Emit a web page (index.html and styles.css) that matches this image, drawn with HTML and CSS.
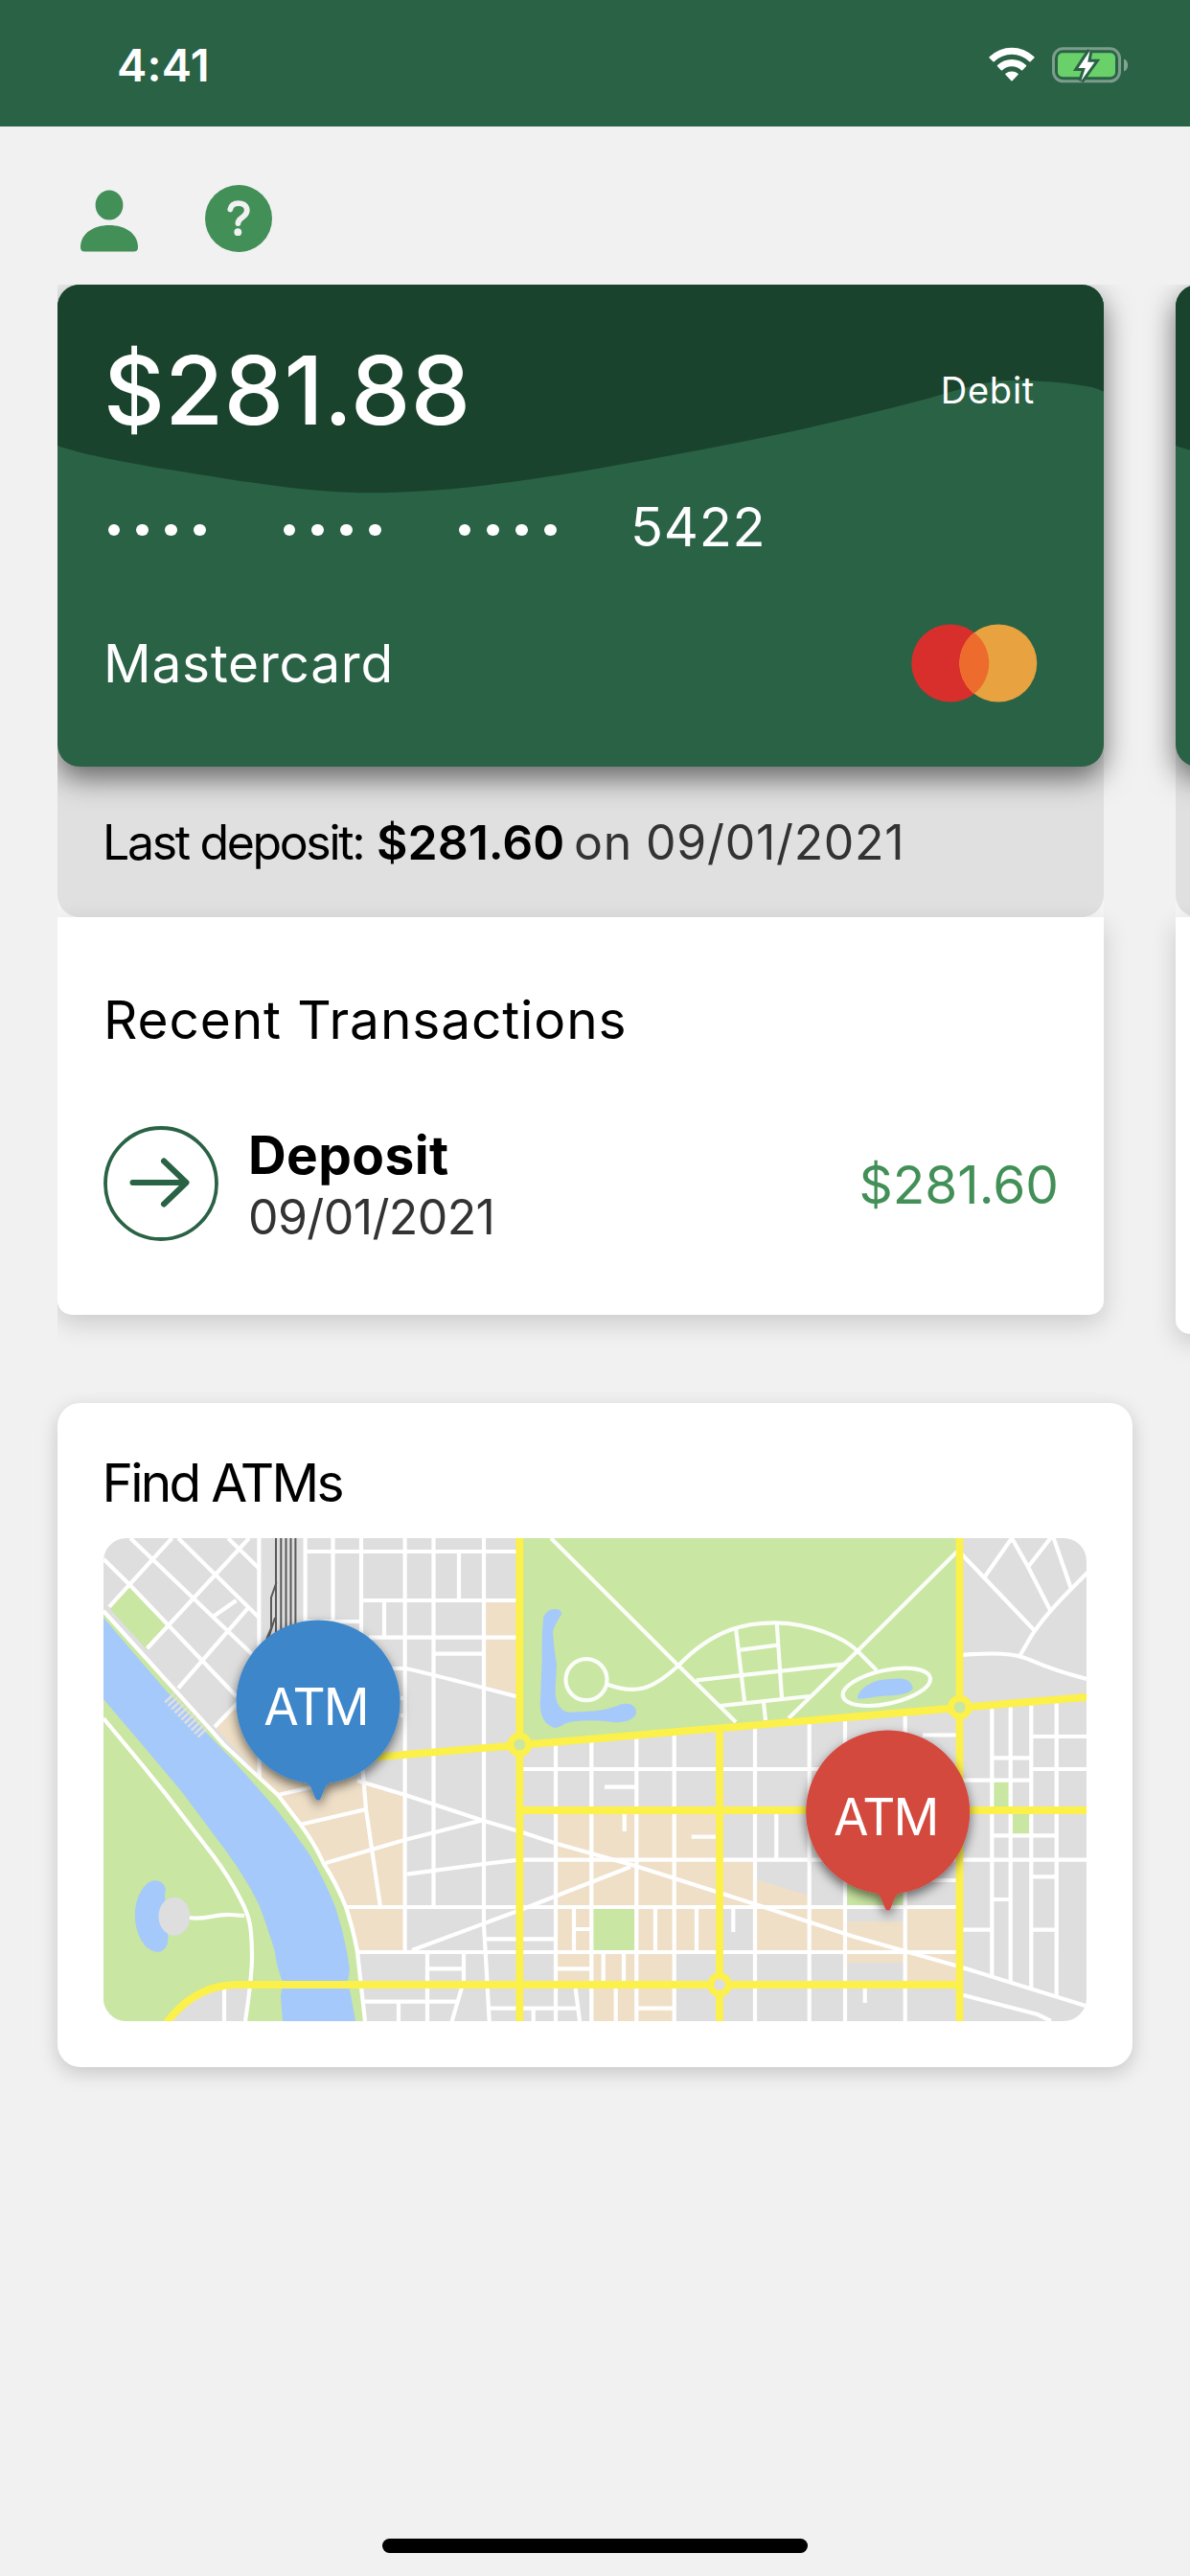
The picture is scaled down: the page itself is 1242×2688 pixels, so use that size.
FILE: index.html
```html
<!DOCTYPE html>
<html lang="en">
<head>
<meta charset="utf-8">
<title>Accounts</title>
<link rel="stylesheet" href="styles.css">
</head>
<body>
<header class="status">
  <span class="status-time">4:41</span>
  <div class="status-icons">
    <svg class="wifi" viewBox="0 0 48 36" fill="#fff">
      <path d="M.6 10.2A33.5 33.5 0 0 1 47.4 10.2a1 1 0 0 1 0 1.3L43.6 15.200a1 1 0 0 1-1.300 0 26.500 26.500 0 0 0-36.600 0 1 1 0 0 1-1.300 0L.6 11.500a1 1 0 0 1 0-1.300z"/>
      <path d="M9 19a21.500 21.500 0 0 1 30 0 1 1 0 0 1 0 1.300l-3.800 3.900a1 1 0 0 1-1.300 0 14.500 14.500 0 0 0-19.800 0 1 1 0 0 1-1.300 0L9 20.300A1 1 0 0 1 9 19z"/>
      <path d="M17.500 27.800a10 10 0 0 1 13 0 .9.9 0 0 1 0 1.300L24.600 35.200a.9.9 0 0 1-1.200 0L17.500 29.100a.9.9 0 0 1 0-1.300z"/>
    </svg>
    <svg class="battery" viewBox="0 0 80 38">
      <rect x="1.500" y="1.800" width="69" height="34" rx="10" fill="none" stroke="#fff" stroke-opacity=".38" stroke-width="3"/>
      <path d="M75 12.500c5.500 2 5.500 11 0 13z" fill="#fff" fill-opacity=".42"/>
      <rect x="6" y="6.300" width="60" height="25" rx="5" fill="#69d06a"/>
      <path d="M39.500 4L27.500 22h7.300l-4.500 13.500L44.500 15.800h-7.300z" fill="#fff" stroke="#2a6246" stroke-width="6" paint-order="stroke"/>
    </svg>
  </div>
</header>

<nav class="toolbar">
  <svg class="icon-person" viewBox="0 0 60 66" fill="#428f57">
    <ellipse cx="30" cy="16" rx="14.400" ry="15.500"/>
    <path d="M0 60C0 46 13 37 30 37s30 9 30 23c0 3-1.500 4.500-4.500 4.500h-51C1.500 64.500 0 63 0 60z"/>
  </svg>
  <svg class="icon-help" viewBox="0 0 70 70">
    <circle cx="35" cy="35" r="35" fill="#428f57"/>
    <path d="M26.300 25.500c.8-4 4-6.400 8.600-6.400 5.300 0 8.900 3 8.900 7.500 0 7.500-9.400 6.900-9.400 13.500" fill="none" stroke="#f1f1f1" stroke-width="5.800" stroke-linecap="round"/>
    <circle cx="34.300" cy="49.200" r="3.900" fill="#f1f1f1"/>
  </svg>
</nav>

<section class="carousel">
  <article class="account">
    <div class="card">
      <svg class="wave" viewBox="0 0 1092 218" preserveAspectRatio="none">
        <path d="M0 0H1092V111.600C1085 108 1077 106 1067 105 1050 102 1020 99.500 995 100 960 101 935 112 900 121 795 149 690 170 580 189 480 207 400 217 328 217.300 250 217.500 165 200 103 191 65 184 25 177 0 168z"/>
      </svg>
      <div class="card-top">
        <span class="balance">$281.88</span>
        <span class="kind">Debit</span>
      </div>
      <div class="number">
        <span class="dots"><i></i><i></i><i></i><i></i></span>
        <span class="dots"><i></i><i></i><i></i><i></i></span>
        <span class="dots"><i></i><i></i><i></i><i></i></span>
        <span class="last4">5422</span>
      </div>
      <div class="card-bottom">
        <span class="brand">Mastercard</span>
        <svg class="logo" viewBox="0 0 132 82">
          <circle cx="40.800" cy="41" r="40.500" fill="#d92f2c"/>
          <circle cx="90.800" cy="41" r="40.500" fill="#e8a23f"/>
          <path d="M65.800 9.200a40.500 40.500 0 0 1 0 63.600 40.500 40.500 0 0 1 0-63.600z" fill="#ed6b2c"/>
        </svg>
      </div>
    </div>
    <div class="strip-wrap">
      <div class="strip">
        <span class="strip-label">Last deposit:</span>
        <strong>$281.60</strong>
        <span class="strip-date">on</span>
        <span class="strip-date">09/01/2021</span>
      </div>
    </div>
    <div class="panel">
      <h2>Recent Transactions</h2>
      <div class="tx">
        <svg class="tx-icon" viewBox="0 0 120 120" fill="none" stroke="#2a6246">
          <circle cx="60" cy="60" r="58" stroke-width="3.800"/>
          <path d="M30.500 59H86M63 36.500L86.500 59 63 81.500" stroke-width="6" stroke-linecap="round" stroke-linejoin="round"/>
        </svg>
        <div class="tx-info">
          <span class="tx-name">Deposit</span>
          <span class="tx-date">09/01/2021</span>
        </div>
        <span class="tx-amount">$281.60</span>
      </div>
    </div>
  </article>
  <article class="account">
    <div class="card">
      <svg class="wave" viewBox="0 0 1092 218" preserveAspectRatio="none">
        <path d="M0 0H1092V111.600C1085 108 1077 106 1067 105 1050 102 1020 99.500 995 100 960 101 935 112 900 121 795 149 690 170 580 189 480 207 400 217 328 217.300 250 217.500 165 200 103 191 65 184 25 177 0 168z"/>
      </svg>
    </div>
    <div class="strip-wrap"><div class="strip"></div></div>
    <div class="panel panel-tall"></div>
  </article>
</section>

<section class="atms">
  <h2>Find ATMs</h2>
  <svg class="map" viewBox="108 1605 1026 504">
    <defs>
      <filter id="pin-shadow" x="-30%" y="-30%" width="160%" height="160%">
        <feDropShadow dx="0" dy="5" stdDeviation="6" flood-color="#000" flood-opacity=".55"/>
      </filter>
      <path id="pin" d="M-11.500 84.700A85.500 85.500 0 1 1 11.500 84.700C7 87 5 96 2.500 101 1 103-1 103-2.500 101-5 96-7 87-11.500 84.700z"/>
    </defs>
    <rect x="108" y="1605" width="1026" height="504" fill="#dedede"/>

    <!-- commercial blocks -->
    <g fill="#efdfc7">
      <path d="M507 1672h34v97l-34-10zM224 1802l24-26 62 60 64 22 48 15v162h-50L361 1990 338 1945 290 1873z"/>
      <path d="M582 1891h169v99H582zM751 1943h37v47h-37zM788 1961l56 17v12h-56zM582 1990h37v47h-37zM662 1990h89v47h-89zM788 1990h95v47h-95z"/>
      <path d="M883 2005h62v43h-62zM946 1991h53v77h-53zM582 2037h122v34H582zM619 2071h85v38h-85z"/>
    </g>
    <path d="M751 1990h37v47h-37z" fill="#dedede"/>

    <!-- parks -->
    <g fill="#c9e6a2">
      <path d="M542 1605h459v177l-459 39z"/>
      <path d="M134.700 1655L175 1695 153 1721 115 1679zM619 1992h43v44h-43zM883 1962h61v27h-61zM1037 1859h16v27h-16zM1057 1893h17v21h-17z"/>
      <path d="M108 1681L233 1820 290 1873 313 1903 338 1945 361 1990 373 2037 381 2109H256L261 2071H240Q200 2074 175 2109H108z"/>
    </g>

    <!-- water -->
    <g fill="#a5c9fb">
      <path d="M108 1688L174 1765 227 1820C250 1843 270 1867 290 1890Q310 1916 323 1935 339 1962 350 1990 360 2020 364.700 2053 365 2063 361.700 2068 366 2078 367 2087L371 2109H295L293 2083 295 2068 Q288 2050 287 2037 279 2010 270 1987 258 1962 237 1933L190 1870 148 1820 108 1773z"/>
      <path d="M172 1977C176 1965 163 1957 153 1966 137 1981 137 2014 152 2031 165 2043 178 2035 175 2018z"/>
      <path d="M585.700 1685C588 1677 570 1676 567 1689Q565 1710 565.700 1730L564 1773C563 1790 567 1799 579 1803 587 1802 587 1798 597 1796.500Q620 1794 640 1797C650 1798 663 1795 664 1787 664 1777 652 1776 644 1780 625 1787 615 1785 593 1787 583 1784 580 1775 579.500 1765L581 1737Q578 1720 577 1703 578 1697 585.700 1685z"/>
      <path d="M895 1772.700C895 1763 910 1752 930 1752 946 1750 951 1754 953 1762 948 1768 938 1769 925 1769.500 912 1770 905 1773 895 1772.700z"/>
    </g>
    <ellipse cx="182" cy="1999.700" rx="16.500" ry="20" fill="#dedede"/>
    <path d="M176 1771L212 1809" stroke="#dedede" stroke-width="13" stroke-dasharray="2.600 2.400"/>

    <!-- railway -->
    <g fill="none" stroke="#5a5a5a" stroke-width="2">
      <path d="M288 1605v110M293.300 1605v110M298.500 1605v110M303.500 1605v110M308.400 1605v110M288.600 1651l-5.600 16v32l-5 12M287 1688l-7 22"/>
    </g>

    <!-- streets -->
    <g fill="none" stroke="#fff" stroke-width="4.200">
      <path d="M108 1681L217 1801.700 233 1820 290 1873 313 1903 Q328 1923 338 1945 351 1965 361 1990 369 2014 373 2037L381 2109"/>
      <path d="M108 1793L147 1840 173 1872 223 1937Q240 1960 250 1980C261 2000 263 2010 263 2045Q262 2070 256 2109M198 2001C215 2004 225 1997 240 1998L255 1999M234 2074v35"/>
      <path d="M108 1626.700L134.700 1653 246.600 1770M136 1605L264 1727M186 1605L270.400 1688M238 1605L270.400 1636.700M179.500 1605L114 1676.700M260 1605L153.600 1720M260 1676.700L186 1761.700M246.600 1670L220.800 1688M250 1775L224 1802"/>
      <path d="M270.400 1605v120M318.600 1605v90M347.500 1605v87M377 1605v100M422.600 1605v432M452.500 1605v385M505 1605v405L506.700 2037 510.700 2109M479 1619v51M401 1670v39"/>
      <path d="M318.600 1619H542M377 1670H542M385 1708.700H542M318.600 1692H377M452 1725.700H505M405 1741H422Q428 1741 542 1771M424 1772h-6M424 1790h-6"/>
      <path d="M373 1858L423 1873 505 1900 542 1911 580 1923.500 663 1947 786.700 1986.500 890 2020.500 1000 2051.700 1133 2093"/>
      <path d="M340 1944L422 1920 505 1899M313 1904L382 1888M290 1873L325 1865M378 1840L382 1888 397 1990M270.700 1832v23"/>
      <path d="M425 1955.700L505 1945 542 1940.700H1134M360 1990H1001M373 2037H1001M430 2035L538 1995 658 1948M508 2023.300H578M446 2037v72M484 2037v30L471.700 2109M446 2054.300H484M378 2088.700H477M416 2089v20M510 2095.700H603"/>
      <path d="M580 1819v290M617.300 1816v293M664.300 1812v297M703.700 1809v300M788 1802v307M844.700 1797v312M882 1794v315M944.700 1788v321M542 1846H1001M631 1864.700H664M651.700 1892v19M721.700 1916.700H747M810.300 1892v49"/>
      <path d="M599 1990v47M599 2013H617M684 1990v47M727 1990v47M765.300 1990v26M629.700 2037v30M651 2037v30M581 2054.300H617M642.700 2075v34M600.700 2075L605 2109M556.700 2096v13M664 2095.700H704M902.700 2075v15"/>
      <path d="M963 1810.500H998M944 1962H1000M1035.300 1780v283M1054.700 1778v290M1076.300 1776v299M1102.700 1774v309M1035 1834.300H1076M1076 1812H1134M1076 1846H1134M1005 1857.700H1076M1035 1915.300H1102M1076 1958.300H1102M1035 1982H1055M1004 2013.700H1035M1076 2013.700H1102M1005 2081.700L1083 2102 1097 2109"/>
      <path d="M1003 1621L1080 1701.700M1028 1645L1056 1605 1073 1635 1096 1680M1073 1635L1098 1603M1099 1603L1118 1658M1136 1640L1118 1658Q1090 1686 1076.700 1706.700L1065 1726.700M1003 1727Q1050 1723 1068 1729.500C1080 1733 1085 1739 1134 1752"/>
    </g>

    <!-- park paths -->
    <g fill="none" stroke="#fff" stroke-opacity=".93" stroke-width="4.200">
      <path d="M575 1605L708 1738 768 1797M634 1757.700C663 1768 680 1764 708 1738 745 1699 780 1693 810 1693.300 845 1694 880 1708 895 1722.700L915 1743"/>
      <circle cx="612" cy="1752.700" r="21.500"/>
      <path d="M1000 1618L895 1722.700 823 1793M726.700 1753.300L880 1736.700M751.700 1780L845 1770M768 1699L777 1775M810.700 1693L816 1771.700M773 1721.700L811.700 1716.700M797 1776.700L799 1795"/>
      <ellipse cx="925.300" cy="1760.300" rx="46.500" ry="17.500" transform="rotate(-12 925.300 1760.300)"/>
    </g>

    <!-- main roads -->
    <g fill="none" stroke="#fcf04a" stroke-width="7.800">
      <path d="M542.300 1605v504M751 1803v306M1001.500 1605v504M380 1834.500L542 1821 1001 1782 1134 1771M542 1889H1134M172 2113Q202 2072 245 2071H1001"/>
    </g>
    <g stroke="#fcf04a" stroke-width="6.800">
      <circle cx="542.300" cy="1820.500" r="9.400" fill="#c9e6a2"/>
      <circle cx="1001.700" cy="1781.500" r="9.400" fill="#c9e6a2"/>
      <circle cx="751" cy="2071" r="9.400" fill="#dedede"/>
    </g>

    <!-- ATM pins -->
    <g class="pin" transform="translate(332 1776)">
      <use href="#pin" fill="#3c86ca" filter="url(#pin-shadow)"/>
      <text x="-2.500" y="24">ATM</text>
    </g>
    <g class="pin" transform="translate(926.700 1891)">
      <use href="#pin" fill="#d3483e" filter="url(#pin-shadow)"/>
      <text x="-2.500" y="23.500">ATM</text>
    </g>
  </svg>
</section>

<div class="home-bar"></div>
</body>
</html>
```

FILE: styles.css
```css
* { box-sizing: border-box; }

body {
  margin: 0;
  width: 1242px;
  height: 2688px;
  display: flex;
  flex-direction: column;
  overflow: hidden;
  background: #f1f1f1;
  color: #000;
  font-family: Inter, "Liberation Sans", sans-serif;
  white-space: nowrap;
}

svg { display: block; flex: none; }
h2 { margin: 0; font-size: 55px; font-weight: 400; line-height: 68px; }

/* status bar */
.status {
  flex: none;
  height: 132px;
  padding: 38px 64px 0 122px;
  display: flex;
  justify-content: space-between;
  align-items: flex-start;
  background: #2a6246;
  color: #fff;
}
.status-time { font-size: 47px; font-weight: 600; line-height: 60px; letter-spacing: .2px; }
.status-icons { display: flex; gap: 18.500px; padding-top: 11px; }
.wifi { width: 48px; height: 36px; }
.battery { width: 80px; height: 38px; }

/* toolbar */
.toolbar {
  flex: none;
  height: 165px;
  padding: 61px 0 0 84px;
  display: flex;
  gap: 70px;
}
.icon-person { width: 60px; height: 66px; margin-top: 4.500px; }
.icon-help { width: 70px; height: 70px; }

/* accounts */
.carousel {
  flex: none;
  height: 1153px;
  margin-left: 60px;
  display: flex;
  gap: 75px;
  overflow: hidden;
}
.account { flex: none; width: 1092px; }

.card {
  position: relative;
  z-index: 2;
  height: 503px;
  padding: 50px 69px 0 48px;
  border-radius: 23px;
  background: #2a6246;
  color: #fff;
  box-shadow: 0 12px 30px rgba(0, 0, 0, .55);
}
.wave {
  position: absolute;
  top: 0;
  left: 0;
  width: 1092px;
  height: 218px;
  border-radius: 23px 23px 0 0;
  fill: #1a432d;
}
.card-top, .number, .card-bottom { position: relative; display: flex; }
.card-top, .card-bottom { justify-content: space-between; }
.balance { font-size: 99px; font-weight: 500; line-height: 120px; letter-spacing: .4px; }
.kind { margin: 37px 3px 0 0; font-size: 38px; line-height: 46px; letter-spacing: .74px; }

.number { margin-top: 49px; padding-left: 4.500px; }
.dots { display: flex; gap: 17.500px; width: 183px; padding-top: 30.500px; }
.dots i { width: 12.400px; height: 12.400px; border-radius: 50%; background: #fff; }
.last4 { font-size: 56px; line-height: 68px; letter-spacing: .71px; margin-left: -3.500px; }

.card-bottom { margin-top: 74px; align-items: center; }
.brand { font-size: 55px; line-height: 68px; letter-spacing: .76px; }
.logo { width: 132px; height: 82px; margin: -7px 0; }

.strip-wrap { margin-top: -30px; background: #f5f5f5; }
.strip {
  height: 187px;
  padding: 79px 0 0 47px;
  border-radius: 0 0 23px 23px;
  display: grid;
  grid-template-columns: 286px 206px 75px auto;
  background: #e0e0e0;
  font-size: 50px;
  line-height: 60px;
}
.strip-label { letter-spacing: -2.350px; }
.strip strong { font-weight: 600; letter-spacing: 0; }
.strip-date { color: #333; letter-spacing: .7px; }

.panel {
  height: 415px;
  padding: 73px 48px 0;
  border-radius: 0 0 15px 15px;
  background: #fff;
  box-shadow: 0 9px 27px rgba(0, 0, 0, .16);
}
.panel-tall { height: 435px; }
.panel h2 { letter-spacing: .88px; }

.tx { display: flex; align-items: flex-start; margin-top: 76.500px; }
.tx-icon { width: 120px; height: 120px; }
.tx-info { display: flex; flex-direction: column; gap: 5px; margin-left: 31px; }
.tx-name { font-size: 55px; font-weight: 700; line-height: 60px; letter-spacing: .4px; }
.tx-date { color: #333; font-size: 50px; line-height: 60px; letter-spacing: -.6px; }
.tx-amount { margin: 27px -1px 0 auto; color: #428f57; font-size: 55px; line-height: 68px; }

/* ATM map */
.atms {
  flex: none;
  width: 1122px;
  margin: 14px 0 0 60px;
  padding: 49px 48px 48px;
  border-radius: 24px;
  background: #fff;
  box-shadow: 0 6px 20px rgba(0, 0, 0, .18);
}
.atms h2 { margin-left: -1.500px; letter-spacing: -2.740px; }
.map { width: 1026px; height: 504px; margin-top: 24px; border-radius: 24px; }
.pin text {
  fill: #fff;
  font-size: 53px;
  font-weight: 400;
  letter-spacing: -1.890px;
  text-anchor: middle;
}

.home-bar {
  width: 444px;
  height: 15px;
  margin: auto auto 24px;
  border-radius: 8px;
  background: #000;
}
```
